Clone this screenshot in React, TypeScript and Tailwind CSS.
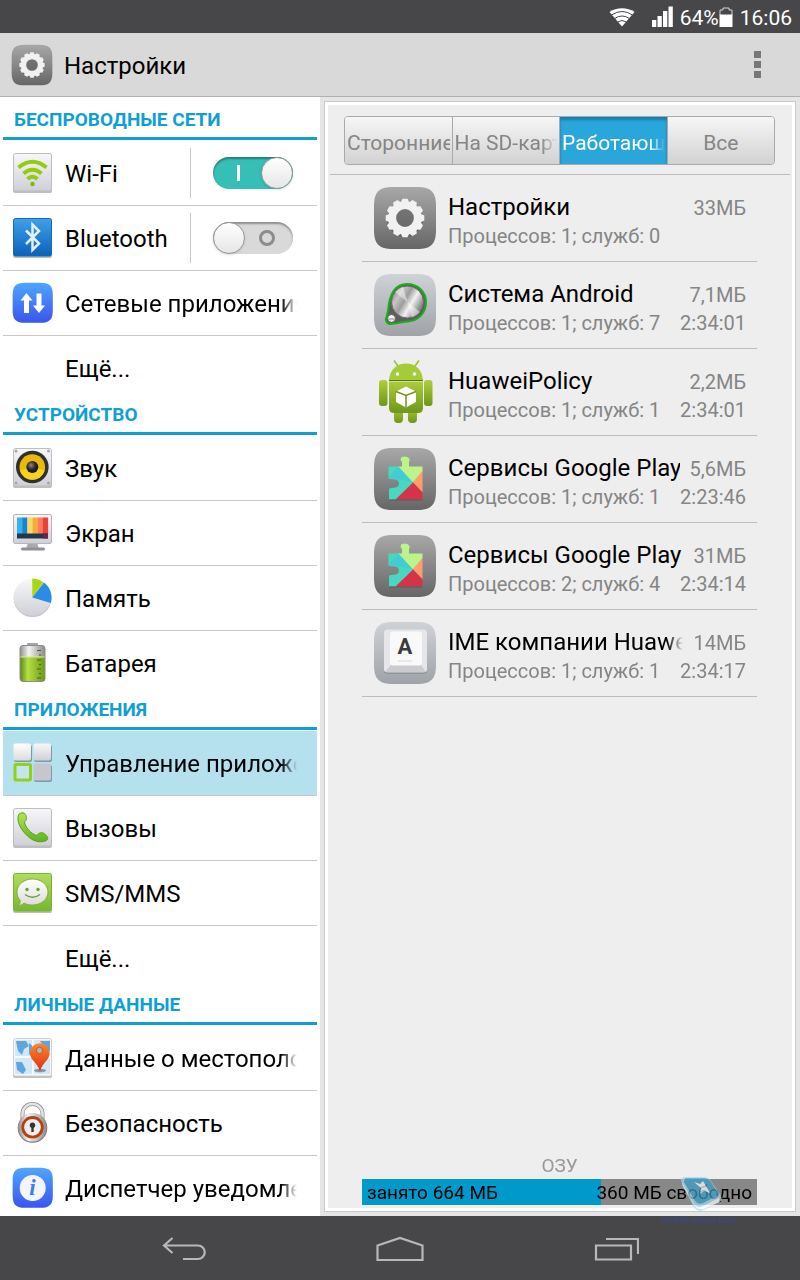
import { useState, type ReactNode } from 'react';
import clsx from 'clsx';

const SQUIRCLE = 'M1 20C1 6 6 1 20 1H44C58 1 63 6 63 20V44C63 58 58 63 44 63H20C6 63 1 58 1 44Z';

// Shared gradients, referenced by the icons below
function Gradients() {
    const vertical = [
        ['gGrey', '#a8a8a8', '#666666'],
        ['gSilver', '#cfd2d6', '#9fa2a7'],
        ['gPlate', '#f7f7fa', '#cfcfd8'],
        ['gWhite', '#ffffff', '#dcdcdc'],
        ['gBlue', '#4ea6ff', '#3a55ee'],
        ['gBt', '#3fa0ec', '#0a62ba'],
        ['gGreen', '#b2dc5c', '#76b82a'],
        ['gDroid', '#b0cf3c', '#6f961b'],
        ['gPhone', '#b5e356', '#5fb31c'],
        ['gPin', '#ff8a2a', '#e02a12'],
    ];
    return (
        <svg width="0" height="0" className="absolute" aria-hidden="true">
            <defs>
                {vertical.map(([id, from, to]) => (
                    <linearGradient key={id} id={id} x1="0" y1="0" x2="0" y2="1">
                        <stop offset="0" stopColor={from} />
                        <stop offset="1" stopColor={to} />
                    </linearGradient>
                ))}
                <linearGradient id="gBattery" x1="0" y1="0" x2="1" y2="0">
                    <stop offset="0" stopColor="#5f8f12" />
                    <stop offset="0.3" stopColor="#b5df45" />
                    <stop offset="1" stopColor="#6c9c12" />
                </linearGradient>
                <linearGradient id="gMetal" x1="0" y1="0" x2="1" y2="0">
                    <stop offset="0" stopColor="#8f8f8f" />
                    <stop offset="0.35" stopColor="#f4f4f4" />
                    <stop offset="1" stopColor="#8a8a8a" />
                </linearGradient>
                <linearGradient id="gKnob" x1="0" y1="0" x2="1" y2="0.6">
                    <stop offset="0" stopColor="#6f6f6f" />
                    <stop offset="0.3" stopColor="#c6c6c6" />
                    <stop offset="0.5" stopColor="#9d9d9d" />
                    <stop offset="0.7" stopColor="#f2f2f2" />
                    <stop offset="1" stopColor="#7a7a7a" />
                </linearGradient>
                <radialGradient id="gCone" cx="0.4" cy="0.35" r="0.7">
                    <stop offset="0" stopColor="#8a8a8a" />
                    <stop offset="0.5" stopColor="#2a2a2a" />
                    <stop offset="1" stopColor="#111111" />
                </radialGradient>
            </defs>
        </svg>
    );
}

function SmallIcon({ children }: { children?: ReactNode }) {
    return (
        <svg viewBox="0 0 42 42" className="size-[42px] shrink-0" aria-hidden="true">
            {children}
        </svg>
    );
}

function Plate({ fill = 'url(#gPlate)', stroke = '#bdbdc4' }: { fill?: string; stroke?: string }) {
    return (
        <>
            <rect x="1" y="2.500" width="39" height="38.500" rx="2" fill="#000" opacity="0.25" />
            <rect x="1.500" y="1.500" width="38" height="37.500" rx="2" fill={fill} stroke={stroke} />
        </>
    );
}

function WifiIcon() {
    return (
        <SmallIcon>
            <Plate />
            <g fill="none" stroke="#93cc0f" strokeWidth="4">
                <path d="M6.500 15.500Q20.500 4 34.500 15.500" />
                <path d="M11.500 21.500Q20.500 14 29.500 21.500" />
                <path d="M15.500 27Q20.500 22.500 25.500 27" />
            </g>
            <circle cx="20.500" cy="32" r="2.200" fill="#7db80c" />
        </SmallIcon>
    );
}

function BluetoothIcon() {
    return (
        <SmallIcon>
            <Plate fill="url(#gBt)" stroke="#1a68b0" />
            <path d="M14 13.500L27 26.500L20.500 33V7.500L27 14L14 27" fill="none" stroke="#e4eff9" strokeWidth="2.500" />
        </SmallIcon>
    );
}

function NetworkIcon() {
    return (
        <SmallIcon>
            <g transform="scale(0.648)">
                <path d={SQUIRCLE} fill="url(#gBlue)" />
            </g>
            <path d="M14.500 11L20.500 18.500H17V31H12V18.500H8.500Z M27 31L21 23.500H24.500V11.500H29.500V23.500H33Z" fill="#fff" />
        </SmallIcon>
    );
}

function SoundIcon() {
    return (
        <SmallIcon>
            <Plate />
            {[[4, 4], [36.5, 4], [4, 36], [36.5, 36]].map(([cx, cy]) => (
                <circle key={`${cx}-${cy}`} cx={cx} cy={cy} r="1.500" fill="#a5a5a8" />
            ))}
            <circle cx="20.300" cy="20" r="16.300" fill="#303030" />
            <circle cx="20.300" cy="20" r="12.800" fill="#eab90c" />
            <path d="M8 23.500A12.800 12.800 0 0 0 32.600 23.500L20.300 20Z" fill="#f6d31c" />
            <circle cx="20.300" cy="20" r="6" fill="url(#gCone)" />
        </SmallIcon>
    );
}

function ScreenIcon() {
    const bars = ['#2fb5ea', '#1b82cf', '#f8d869', '#f7ae2e', '#ff7a5c', '#ee4038'];
    return (
        <SmallIcon>
            <path d="M16 31H25L27 36.500H14Z" fill="#a9a9b0" />
            <rect x="9" y="35.500" width="24" height="3" rx="1.500" fill="#8f8f96" />
            <rect x="1.500" y="2.500" width="38" height="29" rx="1.500" fill="url(#gPlate)" stroke="#b5b5bc" />
            {bars.map((color, i) => (
                <rect key={color} x={5 + i * 5.17} y="5.500" width="5.300" height="17" fill={color} />
            ))}
            <rect x="5" y="21.500" width="31" height="5" fill="#20384f" />
            <rect x="31" y="21.500" width="5" height="5" fill="#6b2350" />
        </SmallIcon>
    );
}

function StorageIcon() {
    return (
        <SmallIcon>
            <circle cx="20.500" cy="21.300" r="18.800" fill="#9a9aa2" opacity="0.6" />
            <circle cx="20.300" cy="20.300" r="18.600" fill="url(#gPlate)" />
            <path d="M20.300 20.500V1.500A19 19 0 0 1 31.500 5.500Z" fill="#a8d80e" />
            <path d="M20.300 20.500L32 5.500A19 19 0 0 1 38.800 26Z" fill="#2a8ce6" />
        </SmallIcon>
    );
}

function BatteryIcon() {
    return (
        <SmallIcon>
            <rect x="15" y="1" width="11" height="4" rx="1" fill="#a5a5a5" />
            <rect x="8" y="3.500" width="25" height="36" rx="3" fill="url(#gMetal)" stroke="#8c8c8c" />
            <rect x="8.500" y="15" width="24" height="24" rx="2" fill="url(#gBattery)" />
            <path d="M8.500 15H32.500" stroke="#d5ee8a" />
            <path d="M25 8.500H29M27 13H29M25 18H29M27 22.500H29M25 27H29M27 31.500H29M25 36H29" stroke="#4a5a2a" />
        </SmallIcon>
    );
}

function AppsIcon() {
    return (
        <SmallIcon>
            <g fill="#000" opacity="0.3">
                <rect x="2" y="3" width="18" height="17" rx="2" />
                <rect x="22" y="3" width="18" height="17" rx="2" />
                <rect x="22" y="23" width="18" height="17" rx="2" />
            </g>
            <rect x="1.500" y="1.500" width="17.500" height="17" rx="2" fill="url(#gWhite)" />
            <rect x="21.500" y="1.500" width="17.500" height="17" rx="2" fill="url(#gPlate)" />
            <rect x="21.500" y="21.500" width="17.500" height="17" rx="2" fill="#c6c6cf" />
            <rect x="3" y="22.500" width="15.500" height="15.500" rx="1" fill="#c5e5ee" stroke="#92d01a" strokeWidth="3" />
        </SmallIcon>
    );
}

function CallsIcon() {
    return (
        <SmallIcon>
            <Plate />
            <path
                d="M6.500 8C8 5.500 12 5 13.500 7.500C15 10 15 13 12.500 15C13 20 19 27 25 28.500C27 25 31 25 33.500 27.500C36 30 36.500 32 34.500 33.500C30 35.500 23 36 15.500 29C8 22 4.500 14 6.500 8Z"
                fill="url(#gPhone)"
                stroke="#5c9e1e"
            />
        </SmallIcon>
    );
}

function MessagesIcon() {
    return (
        <SmallIcon>
            <Plate fill="url(#gGreen)" stroke="#7db23a" />
            <path d="M20.500 7C29 7 36 12.500 36 20S29 33 20.500 33C17 33 14.500 32.500 12 31C10 33 8.500 33.500 6 33.500C8 32 8.500 30 8 28C6 26 5 23.500 5 20C5 12.500 12 7 20.500 7Z" fill="url(#gWhite)" stroke="#83ad4c" />
            <circle cx="15" cy="17.500" r="1.700" fill="#6aa32a" />
            <circle cx="26" cy="17.500" r="1.700" fill="#6aa32a" />
            <path d="M13 22.500Q20.500 28 28 22.500" fill="none" stroke="#6aa32a" strokeWidth="1.500" />
        </SmallIcon>
    );
}

function LocationIcon() {
    return (
        <SmallIcon>
            <Plate fill="#f6f8fa" stroke="#cfcfcf" />
            <rect x="3" y="3" width="35" height="34" fill="#d3e8f6" />
            <path d="M4 4H14L17 9L12 12L10 18L6 14Z M17 6L24 12L21 20L17 17Z M4 25H10L14 33L11 37L5 33Z M28 4H38V14L32 10Z" fill="#5ea6dc" />
            <path d="M21 3V37M3 20H38" stroke="#fff" strokeWidth="1.500" />
            <ellipse cx="28" cy="33.500" rx="6" ry="1.800" fill="#000" opacity="0.35" />
            <path d="M28 34.500C25.500 25 18 23.500 18 16A9.800 9.800 0 0 1 37.600 16C37.600 23.500 30.500 25 28 34.500Z" fill="url(#gPin)" />
            <circle cx="27.500" cy="13.500" r="3.200" fill="#a9b8c0" stroke="#c9531d" />
        </SmallIcon>
    );
}

function SecurityIcon() {
    return (
        <SmallIcon>
            <path d="M10.500 17V11.500A10 9.500 0 0 1 30.500 11.500V17" fill="none" stroke="#8d8d8d" strokeWidth="4" />
            <path d="M10.500 17V11.500A10 9.500 0 0 1 30.500 11.500V17" fill="none" stroke="#e4e4e4" strokeWidth="2.500" />
            <circle cx="20.500" cy="26" r="14.800" fill="#777" />
            <circle cx="20.500" cy="25.300" r="14.300" fill="url(#gMetal)" />
            <circle cx="20.500" cy="25.300" r="9.800" fill="#eeeeee" stroke="#b8400f" strokeWidth="2.800" />
            <circle cx="20.500" cy="23.300" r="2.700" fill="#333" />
            <path d="M19.300 24H21.700V30H19.300Z" fill="#333" />
        </SmallIcon>
    );
}

function InfoIcon() {
    return (
        <SmallIcon>
            <g transform="scale(0.648)">
                <path d={SQUIRCLE} fill="url(#gBlue)" />
            </g>
            <circle cx="20.700" cy="21" r="13" fill="#f3f6ff" />
            <text x="20.500" y="28" textAnchor="middle" fontFamily="Liberation Serif, serif" fontStyle="italic" fontWeight="700" fontSize="23" fill="#3f7af2">
                i
            </text>
        </SmallIcon>
    );
}

function GearIcon({ className }: { className: string }) {
    const teeth = Array.from({ length: 12 }, (_, i) => i * 30);
    return (
        <svg viewBox="0 0 64 64" className={clsx('shrink-0', className)} aria-hidden="true">
            <path d={SQUIRCLE} fill="url(#gGrey)" />
            <circle cx="32" cy="33" r="18" fill="#4c4c4c" opacity="0.4" />
            <g fill="#f1f1f1">
                {teeth.map((deg) => (
                    <path key={deg} d="M27.500 17L29.500 12.700H34.500L36.500 17Z" transform={`rotate(${deg} 32 32)`} />
                ))}
            </g>
            <circle cx="32" cy="32" r="12.800" fill="none" stroke="#f1f1f1" strokeWidth="7.800" />
        </svg>
    );
}

function AppIcon({ children }: { children: ReactNode }) {
    return (
        <svg viewBox="0 0 64 64" className="size-16 shrink-0" aria-hidden="true">
            {children}
        </svg>
    );
}

function SystemIcon() {
    return (
        <AppIcon>
            <path d={SQUIRCLE} fill="url(#gSilver)" />
            <path
                d="M15 38C16 25 20 11 34 11C45 11 53 19 53 29C53 40 45 48 35 48.500C29 49 24 50 18 51C13 51 12 46 13.500 44Z"
                fill="#5b5f5b"
                stroke="#16b116"
                strokeWidth="2"
            />
            <circle cx="34.500" cy="29" r="16" fill="url(#gKnob)" stroke="#6b6b6b" />
            <path d="M34.500 29L22 19A16 16 0 0 1 30 13.800Z M34.500 29L47 39A16 16 0 0 1 39 44.200Z" fill="#fff" opacity="0.45" />
            <circle cx="18.500" cy="45.500" r="4" fill="url(#gWhite)" stroke="#555" />
            <path d="M15.500 46H21.500" stroke="#888" />
        </AppIcon>
    );
}

function AndroidIcon() {
    return (
        <AppIcon>
            <path d="M25 6L21 0.500M42 6L46 0.500" stroke="#9dbb35" strokeWidth="1.500" />
            <rect x="21" y="46" width="9" height="17" rx="4" fill="url(#gDroid)" />
            <rect x="35" y="46" width="9" height="17" rx="4" fill="url(#gDroid)" />
            <rect x="6" y="20" width="8.500" height="26" rx="3" fill="url(#gDroid)" />
            <rect x="51" y="20" width="8.500" height="26" rx="3" fill="url(#gDroid)" />
            <path d="M16 20H50V48Q50 53 45 53H21Q16 53 16 48Z" fill="url(#gDroid)" />
            <path d="M16 20C17 9 24 3.500 33 3.500S49 9 50 20Z" fill="#a4cb39" />
            <path d="M16 20.500H50" stroke="#55731a" />
            <path d="M16 21.500H50" stroke="#cfe08a" />
            <circle cx="24.500" cy="14" r="1.800" fill="#fff" />
            <circle cx="41.500" cy="14" r="1.800" fill="#fff" />
            <path d="M33 26.500L43 31.500V42L33 47.500L23 42V31.500Z" fill="#fff" />
            <path d="M23 31.500L33 35.500L43 31.500M33 35.500V47.500" fill="none" stroke="#6f961b" strokeWidth="1.500" />
        </AppIcon>
    );
}

function PlayServicesIcon() {
    return (
        <AppIcon>
            <path d={SQUIRCLE} fill="url(#gGrey)" />
            <clipPath id="puzzle">
                <path d="M15.500 19.500H29V15C26.500 12.500 27.500 9.500 31.500 9.500S38 12.500 36 15V19.500H49.500V52.500H16V42C18 39.500 26 42.500 26 36.500S18 33.500 15.500 31.500Z" />
            </clipPath>
            <g clipPath="url(#puzzle)">
                <path d="M15 19H27L40.500 37L24 53H15Z" fill="#48d8c0" />
                <path d="M15 31L26 19L40 35Z" fill="#42cdd0" />
                <path d="M25 19V8H40V19H50V24L40 35.500Z" fill="#bdf38a" />
                <path d="M50 23L40 35.500L50 46Z" fill="#ff9d6e" />
                <path d="M40 35.500L22 53H50V46Z" fill="#d6334a" />
            </g>
            <path d="M16 53H49.500" stroke="#444" opacity="0.5" />
        </AppIcon>
    );
}

function KeyboardIcon() {
    return (
        <AppIcon>
            <path d={SQUIRCLE} fill="url(#gSilver)" />
            <rect x="11" y="9.500" width="43" height="43" rx="3" fill="#7d8085" />
            <rect x="11" y="8.500" width="43" height="43" rx="3" fill="#e6e6ea" />
            <path d="M12 51L18 44H48L53 51Z" fill="#cbcbd0" />
            <rect x="17" y="10.500" width="32" height="34" rx="3" fill="#f9f9f9" />
            <path d="M25 40H39" stroke="#d8d8d8" />
            <text x="32" y="33" textAnchor="middle" fontFamily="Roboto, sans-serif" fontWeight="700" fontSize="22" fill="#3c3c3c">
                A
            </text>
        </AppIcon>
    );
}

const FADE = '[mask-image:linear-gradient(to_right,#000_calc(100%-16px),transparent)]';

type Item = { label: string; icon?: ReactNode; toggle?: boolean; fade?: boolean; active?: boolean };

const sections: { title: string; items: Item[] }[] = [
    {
        title: 'БЕСПРОВОДНЫЕ СЕТИ',
        items: [
            { label: 'Wi-Fi', icon: <WifiIcon />, toggle: true },
            { label: 'Bluetooth', icon: <BluetoothIcon />, toggle: false },
            { label: 'Сетевые приложения', icon: <NetworkIcon />, fade: true },
            { label: 'Ещё...' },
        ],
    },
    {
        title: 'УСТРОЙСТВО',
        items: [
            { label: 'Звук', icon: <SoundIcon /> },
            { label: 'Экран', icon: <ScreenIcon /> },
            { label: 'Память', icon: <StorageIcon /> },
            { label: 'Батарея', icon: <BatteryIcon /> },
        ],
    },
    {
        title: 'ПРИЛОЖЕНИЯ',
        items: [
            { label: 'Управление приложениями', icon: <AppsIcon />, fade: true, active: true },
            { label: 'Вызовы', icon: <CallsIcon /> },
            { label: 'SMS/MMS', icon: <MessagesIcon /> },
            { label: 'Ещё...' },
        ],
    },
    {
        title: 'ЛИЧНЫЕ ДАННЫЕ',
        items: [
            { label: 'Данные о местоположении', icon: <LocationIcon />, fade: true },
            { label: 'Безопасность', icon: <SecurityIcon /> },
            { label: 'Диспетчер уведомлений', icon: <InfoIcon />, fade: true },
        ],
    },
];

const processes = [
    { name: 'Настройки', detail: 'Процессов: 1; служб: 0', size: '33МБ', time: '', icon: <GearIcon className="size-16" /> },
    { name: 'Система Android', detail: 'Процессов: 1; служб: 7', size: '7,1МБ', time: '2:34:01', icon: <SystemIcon /> },
    { name: 'HuaweiPolicy', detail: 'Процессов: 1; служб: 1', size: '2,2МБ', time: '2:34:01', icon: <AndroidIcon /> },
    { name: 'Сервисы Google Play', detail: 'Процессов: 1; служб: 1', size: '5,6МБ', time: '2:23:46', icon: <PlayServicesIcon /> },
    { name: 'Сервисы Google Play', detail: 'Процессов: 2; служб: 4', size: '31МБ', time: '2:34:14', icon: <PlayServicesIcon /> },
    { name: 'IME компании Huawei', detail: 'Процессов: 1; служб: 1', size: '14МБ', time: '2:34:17', icon: <KeyboardIcon />, fade: true },
];

const tabs = [
    { label: 'Сторонние' },
    { label: 'На SD-карте', fade: true },
    { label: 'Работающие', fade: true },
    { label: 'Все' },
];

const ram = { used: 664, free: 360 };

function Toggle({ label, initial }: { label: string; initial: boolean }) {
    const [on, setOn] = useState(initial);
    return (
        <label className="flex h-[50px] shrink-0 items-center border-l border-[#c8c8c8] pr-6 pl-[22px]">
            <input type="checkbox" role="switch" aria-label={label} checked={on} onChange={() => setOn(!on)} className="peer sr-only" />
            <span
                className={clsx(
                    'flex h-8 w-20 items-center justify-between rounded-full shadow-[inset_0_2px_2px_rgba(0,0,0,0.35)]',
                    on ? 'flex-row-reverse bg-[#36bfb6]' : 'bg-[#d9d9d9]'
                )}
            >
                <span className="size-8 rounded-full border border-[#8f9999] bg-gradient-to-b from-white to-[#e6e6e6] shadow-sm" />
                {on ? (
                    <span className="ml-6 h-4 w-[3px] bg-white" />
                ) : (
                    <span className="mr-[18px] size-4 rounded-full border-[3px] border-[#8c8c8c]" />
                )}
            </span>
        </label>
    );
}

function StatusBar() {
    return (
        <div className="flex h-[33px] shrink-0 items-center justify-end bg-[#474749] pr-2 text-[21px] leading-8 text-white">
            <svg viewBox="0 0 26 20" className="mr-[17px] h-5 w-[26px]" aria-label="Wi-Fi">
                <path d="M13 19.500L0.500 5C7.500 0 18.500 0 25.500 5Z" fill="#fff" />
                <path d="M2.500 8Q13 1 23.500 8M5.500 11.500Q13 6.500 20.500 11.500M8.500 15Q13 12 17.500 15" fill="none" stroke="#474749" strokeWidth="1" />
            </svg>
            <svg viewBox="0 0 21 21" className="mr-[7px] size-[21px]" aria-label="Сигнал">
                <path d="M0 14H4.300V21H0ZM5.500 10H9.800V21H5.500ZM11 5H15.300V21H11ZM16.500 0.500H20.800V21H16.500Z" fill="#fff" />
            </svg>
            <span className="pt-0.5">64%</span>
            <svg viewBox="0 0 14 20" className="mr-[7px] h-5 w-3.5" aria-hidden="true">
                <path d="M1 8V3H4V1H10V3H13V8" fill="none" stroke="#d5d5d5" />
                <path d="M0.500 7.500H13.500V20H0.500Z" fill="#fff" />
            </svg>
            <span className="pt-0.5">16:06</span>
        </div>
    );
}

function Sidebar() {
    return (
        <nav className="w-2/5 shrink-0 overflow-y-auto bg-white px-[3px] pt-[9px] [scrollbar-width:none]">
            {sections.map((section) => (
                <section key={section.title}>
                    <h2 className="mb-px flex h-[34px] items-center border-b-[3px] border-[#109fd2] pb-1 pl-[11px] text-[19px] leading-6 font-bold text-[#109fd2]">
                        {section.title}
                    </h2>
                    <ul>
                        {section.items.map((item, i) => (
                            <li
                                key={item.label}
                                className={clsx(
                                    'flex h-[65px] items-center border-b',
                                    i === section.items.length - 1 ? 'border-transparent' : 'border-[#c8c8c8]',
                                    item.active && 'bg-[#b5e0ee]'
                                )}
                            >
                                <button type="button" className="flex h-full min-w-0 flex-1 items-center gap-[11px] pl-[9px] text-left">
                                    {item.icon ?? <SmallIcon />}
                                    <span className={clsx('min-w-0 flex-1 overflow-hidden pt-0.5 text-2xl whitespace-nowrap', item.fade && FADE)}>
                                        {item.label}
                                    </span>
                                </button>
                                {item.toggle !== undefined ? <Toggle label={item.label} initial={item.toggle} /> : <span className="w-5 shrink-0" />}
                            </li>
                        ))}
                    </ul>
                </section>
            ))}
        </nav>
    );
}

function RunningApps() {
    const [tab, setTab] = useState('Работающие');
    return (
        <section className="flex min-w-0 flex-1 bg-[#e5e5e5] p-1">
            <div className="flex min-w-0 flex-1 border border-[#c9c9c9] bg-[#eeeeee]">
                <div className="flex min-w-0 flex-1 flex-col border-[3px] border-white">
                    <div role="tablist" className="mx-0.5 border-b border-[#bdbdbd] pt-2 pr-[15px] pb-[9px] pl-[14px]">
                        <div className="mt-[3px] flex h-[49px] overflow-hidden rounded border border-[#a9a9a9]">
                            {tabs.map((t, i) => {
                                const selected = t.label === tab;
                                return (
                                    <button
                                        key={t.label}
                                        type="button"
                                        role="tab"
                                        aria-selected={selected}
                                        onClick={() => setTab(t.label)}
                                        className={clsx(
                                            'min-w-0 flex-1 px-0.5 pt-1 text-[21px] leading-7',
                                            i > 0 && 'border-l border-[#a9a9a9]',
                                            selected
                                                ? 'bg-[#29a7db] text-white shadow-[inset_0_3px_3px_rgba(0,60,100,0.4)]'
                                                : 'bg-gradient-to-b from-[#f6f6f6] to-[#d2d2d2] text-[#858585]'
                                        )}
                                    >
                                        <span className={clsx('block overflow-hidden whitespace-nowrap', t.fade && FADE)}>{t.label}</span>
                                    </button>
                                );
                            })}
                        </div>
                    </div>
                    <ul className="mr-[35px] ml-[34px]">
                        {processes.map((p, i) => (
                            <li key={i} className="border-b border-[#bdbdbd]">
                                <button type="button" className="flex h-[86px] w-full items-center gap-[11px] px-[11px] text-left">
                                    {p.icon}
                                    <span className="flex min-w-0 flex-1 flex-col pt-1">
                                        <span className="flex items-baseline gap-[10px]">
                                            <span className={clsx('min-w-0 flex-1 overflow-hidden text-2xl whitespace-nowrap text-black', p.fade && FADE)}>
                                                {p.name}
                                            </span>
                                            <span className="text-xl leading-6 text-[#858585]">{p.size}</span>
                                        </span>
                                        <span className="flex justify-between text-xl leading-[26px] text-[#858585]">
                                            <span>{p.detail}</span>
                                            <span>{p.time}</span>
                                        </span>
                                    </span>
                                </button>
                            </li>
                        ))}
                    </ul>
                    <div className="mt-auto mr-[35px] mb-[3px] ml-[34px]">
                        <p className="text-center text-[19px] leading-[26px] text-[#999999]">ОЗУ</p>
                        <div className="relative h-[26px] bg-[#888888]">
                            <div className="h-full bg-[#0099cc]" style={{ width: `${(ram.used / (ram.used + ram.free)) * 93.3}%` }} />
                            <div className="absolute inset-0 flex items-center justify-between px-[5px] pt-0.5 text-[19px] leading-6 text-black">
                                <span>занято {ram.used} МБ</span>
                                <span>{ram.free} МБ свободно</span>
                            </div>
                        </div>
                    </div>
                </div>
            </div>
        </section>
    );
}

function Watermark() {
    return (
        <div className="pointer-events-none absolute right-16 bottom-[53px] flex flex-col items-center">
            <svg viewBox="0 0 44 36" className="ml-2 h-9 w-11 opacity-70" aria-hidden="true">
                <path d="M1 3Q1 0 5 0H24Q28 0 31 4L41 19Q43 23 39 25L24 33Q18 36 14 30L3 10Z" fill="#a5d5ee" />
                <path d="M2 5L14 27Q17 32 23 29L41 20L39 25L24 32Q18 34 14 28L3 9Z" fill="#fff" />
                <path d="M5 1H24Q28 1 31 5L39 18L23 26Q18 28 15 24L4 5Z" fill="#3aa0cc" />
                <path d="M14 5L20 7L23 4L30 16L24 14L20 17L21 11Z" fill="#fff" />
            </svg>
            <span className="text-[9px] leading-[14px] text-[#3b4a94]">mobile-review.com</span>
        </div>
    );
}

function NavBar() {
    const button = 'flex h-full w-[216px] items-center justify-center';
    return (
        <footer className="flex h-16 shrink-0 justify-center bg-[#474749] pt-0.5">
            <button type="button" aria-label="Назад" className={button}>
                <svg viewBox="0 0 46 26" className="h-[26px] w-[46px]" fill="none" stroke="#b8b8b8" strokeWidth="2.200">
                    <path d="M11.500 2L3 9.500L11.500 17M3 9.500H37A6.700 6.700 0 0 1 37 23H22" />
                </svg>
            </button>
            <button type="button" aria-label="Домой" className={button}>
                <svg viewBox="0 0 48 26" className="h-[26px] w-12" fill="none" stroke="#b8b8b8" strokeWidth="2.200">
                    <path d="M1.500 9.500L24 2L46.500 9.500V24H1.500Z" />
                </svg>
            </button>
            <button type="button" aria-label="Недавние" className={button}>
                <svg viewBox="0 0 46 26" className="h-[26px] w-[46px]" fill="none" stroke="#b8b8b8" strokeWidth="2.200">
                    <path d="M3 9.500H38V23.500H3ZM13 3H45V18" />
                </svg>
            </button>
        </footer>
    );
}

export default function App() {
    return (
        <div className="relative flex h-screen w-full flex-col overflow-hidden bg-white font-[Roboto,sans-serif] text-black">
            <Gradients />
            <StatusBar />
            <header className="flex h-16 shrink-0 items-center gap-[11px] border-b border-[#b0b0b0] bg-[#d9d9d9] pr-9 pl-[11px]">
                <GearIcon className="size-[42px]" />
                <h1 className="flex-1 pt-0.5 text-2xl">Настройки</h1>
                <button type="button" aria-label="Меню" className="flex flex-col gap-[3px] p-[3px]">
                    <span className="size-[7px] bg-[#777777]" />
                    <span className="size-[7px] bg-[#777777]" />
                    <span className="size-[7px] bg-[#777777]" />
                </button>
            </header>
            <main className="flex min-h-0 flex-1">
                <Sidebar />
                <RunningApps />
            </main>
            <NavBar />
            <Watermark />
        </div>
    );
}
